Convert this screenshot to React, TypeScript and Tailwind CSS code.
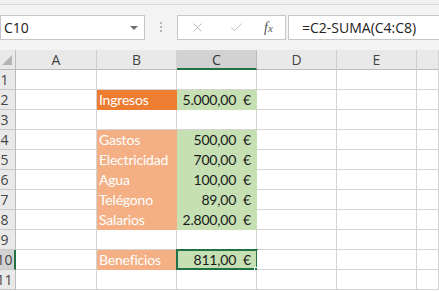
import { X, Check } from "lucide-react"

type Cell = { text?: string; money?: string; fill?: "orange" | "salmon" | "green" }

const COLS = ["A", "B", "C", "D", "E", ""]
const WIDTHS = ["w-[81px]", "w-[80px]", "w-[80px]", "w-[80px]", "w-[80px]", "w-[22px]"]

// rows 1..11, only B and C carry content
const ROWS: { b?: Cell; c?: Cell }[] = [
  {},
  { b: { text: "Ingresos", fill: "orange" }, c: { money: "5.000,00", fill: "green" } },
  {},
  { b: { text: "Gastos", fill: "salmon" }, c: { money: "500,00", fill: "green" } },
  { b: { text: "Electricidad", fill: "salmon" }, c: { money: "700,00", fill: "green" } },
  { b: { text: "Agua", fill: "salmon" }, c: { money: "100,00", fill: "green" } },
  { b: { text: "Telégono", fill: "salmon" }, c: { money: "89,00", fill: "green" } },
  { b: { text: "Salarios", fill: "salmon" }, c: { money: "2.800,00", fill: "green" } },
  {},
  { b: { text: "Beneficios", fill: "salmon" }, c: { money: "811,00", fill: "green" } },
  {},
]

const fillClass = (fill?: Cell["fill"]) => {
  if (fill === "orange") return "bg-[#ed7d31] border-[#ed7d31] text-white"
  if (fill === "salmon") return "bg-[#f4b084] border-[#f4b084] text-white"
  if (fill === "green") return "bg-[#c6e0b4] border-[#c6e0b4] text-[#1a1a1a]"
  return "bg-white border-[#d4d4d4]"
}

function GridCell({ cell, width, selected }: { cell?: Cell; width: string; selected?: boolean }) {
  return (
    <div className={`relative ${width} h-full shrink-0 border-r border-b ${fillClass(cell?.fill)} flex items-end`}>
      {cell?.text && <span className="pl-[2px] leading-[18px]">{cell.text}</span>}
      {cell?.money && (
        <span className="flex w-full justify-end pr-[5px] leading-[18px]">
          <span>{cell.money}</span>
          <span className="ml-[7px]">€</span>
        </span>
      )}
      {selected && (
        <>
          <div className="absolute -left-[1px] -top-[1px] h-[21px] w-[82px] border-2 border-[#217346]" />
          <div className="absolute -right-[4px] -bottom-[4px] h-[6px] w-[6px] border border-white bg-[#217346]" />
        </>
      )}
    </div>
  )
}

export default function App() {
  return (
    <div className="h-[291px] w-[439px] overflow-hidden bg-white" style={{ fontFamily: "'Open Sans', 'Noto Sans', sans-serif" }}>
      {/* Top strip */}
      <div className="h-[5px] border-b border-[#dadada] bg-[#f0f0f0]" />

      {/* Formula bar */}
      <div className="flex h-[45px] items-start bg-[#f3f3f3] pt-[10px]">
        <div className="flex h-[25px] w-[145px] items-center justify-between border border-[#c6c6c6] bg-white pl-[3px] pr-[6px] text-[14px] text-[#222]">
          <span>C10</span>
          <span className="h-0 w-0 border-x-[4px] border-t-[4px] border-x-transparent border-t-[#6e6e6e]" />
        </div>
        <div className="flex w-[32px] flex-col items-center justify-center gap-[2px] pt-[7px]">
          <span className="h-[2px] w-[2px] bg-[#b5b5b5]" />
          <span className="h-[2px] w-[2px] bg-[#b5b5b5]" />
          <span className="h-[2px] w-[2px] bg-[#b5b5b5]" />
        </div>
        <div className="flex h-[25px] w-[109px] items-center border border-[#c6c6c6] bg-white">
          <X className="ml-[12px] h-[15px] w-[15px] text-[#b8b8b8]" strokeWidth={1.5} />
          <Check className="ml-[24px] h-[15px] w-[15px] text-[#b8b8b8]" strokeWidth={1.5} />
          <span className="ml-[20px] text-[14px] italic text-[#555]" style={{ fontFamily: "'Liberation Serif', serif" }}>
            f<span className="text-[11px]">x</span>
          </span>
        </div>
        <div className="ml-[2px] flex h-[25px] flex-1 items-center border border-r-0 border-[#c6c6c6] bg-white pl-[13px] text-[14px] text-[#222]">
          =C2-SUMA(C4:C8)
        </div>
      </div>

      {/* Column headers */}
      <div className="flex h-[20px] bg-[#e9e9e9] text-[14px] text-[#444]">
        <div className="relative w-[16px] shrink-0 border-r border-b border-[#bcbcbc]">
          <div className="absolute bottom-[4px] right-[3px] h-0 w-0 border-b-[10px] border-l-[10px] border-l-transparent border-b-[#b4b4b4]" />
        </div>
        {COLS.map((c, i) =>
          c === "C" ? (
            <div key={i} className={`${WIDTHS[i]} shrink-0 border-r border-b-2 border-r-[#bcbcbc] border-b-[#217346] bg-[#d2d2d2] text-center leading-[19px] text-[#333]`}>
              {c}
            </div>
          ) : (
            <div key={i} className={`${WIDTHS[i]} shrink-0 border-r border-b border-[#d0d0d0] border-b-[#bcbcbc] text-center leading-[19px]`}>
              {c}
            </div>
          )
        )}
      </div>

      {/* Rows */}
      <div className="text-[14px] tracking-[-0.2px]" style={{ fontFamily: "Lato, 'Noto Sans', sans-serif" }}>
        {ROWS.map((row, r) => {
          const n = r + 1
          const sel = n === 10
          return (
            <div key={n} className="flex h-[20px]">
              <div
                className={`w-[16px] shrink-0 overflow-hidden border-b border-[#c8c8c8] ${sel ? "border-r-2 border-r-[#217346] bg-[#d2d2d2]" : "border-r border-r-[#bcbcbc] bg-[#e9e9e9]"}`}
              >
                <div className="-ml-[7px] w-[23px] text-center text-[14px] leading-[19px] tracking-normal text-[#444]" style={{ fontFamily: "'Open Sans', sans-serif" }}>
                  {n}
                </div>
              </div>
              <GridCell width={WIDTHS[0]} />
              <GridCell width={WIDTHS[1]} cell={row.b} />
              <GridCell width={WIDTHS[2]} cell={row.c} selected={sel} />
              <GridCell width={WIDTHS[3]} />
              <GridCell width={WIDTHS[4]} />
              <GridCell width={WIDTHS[5]} />
            </div>
          )
        })}
      </div>
    </div>
  )
}
